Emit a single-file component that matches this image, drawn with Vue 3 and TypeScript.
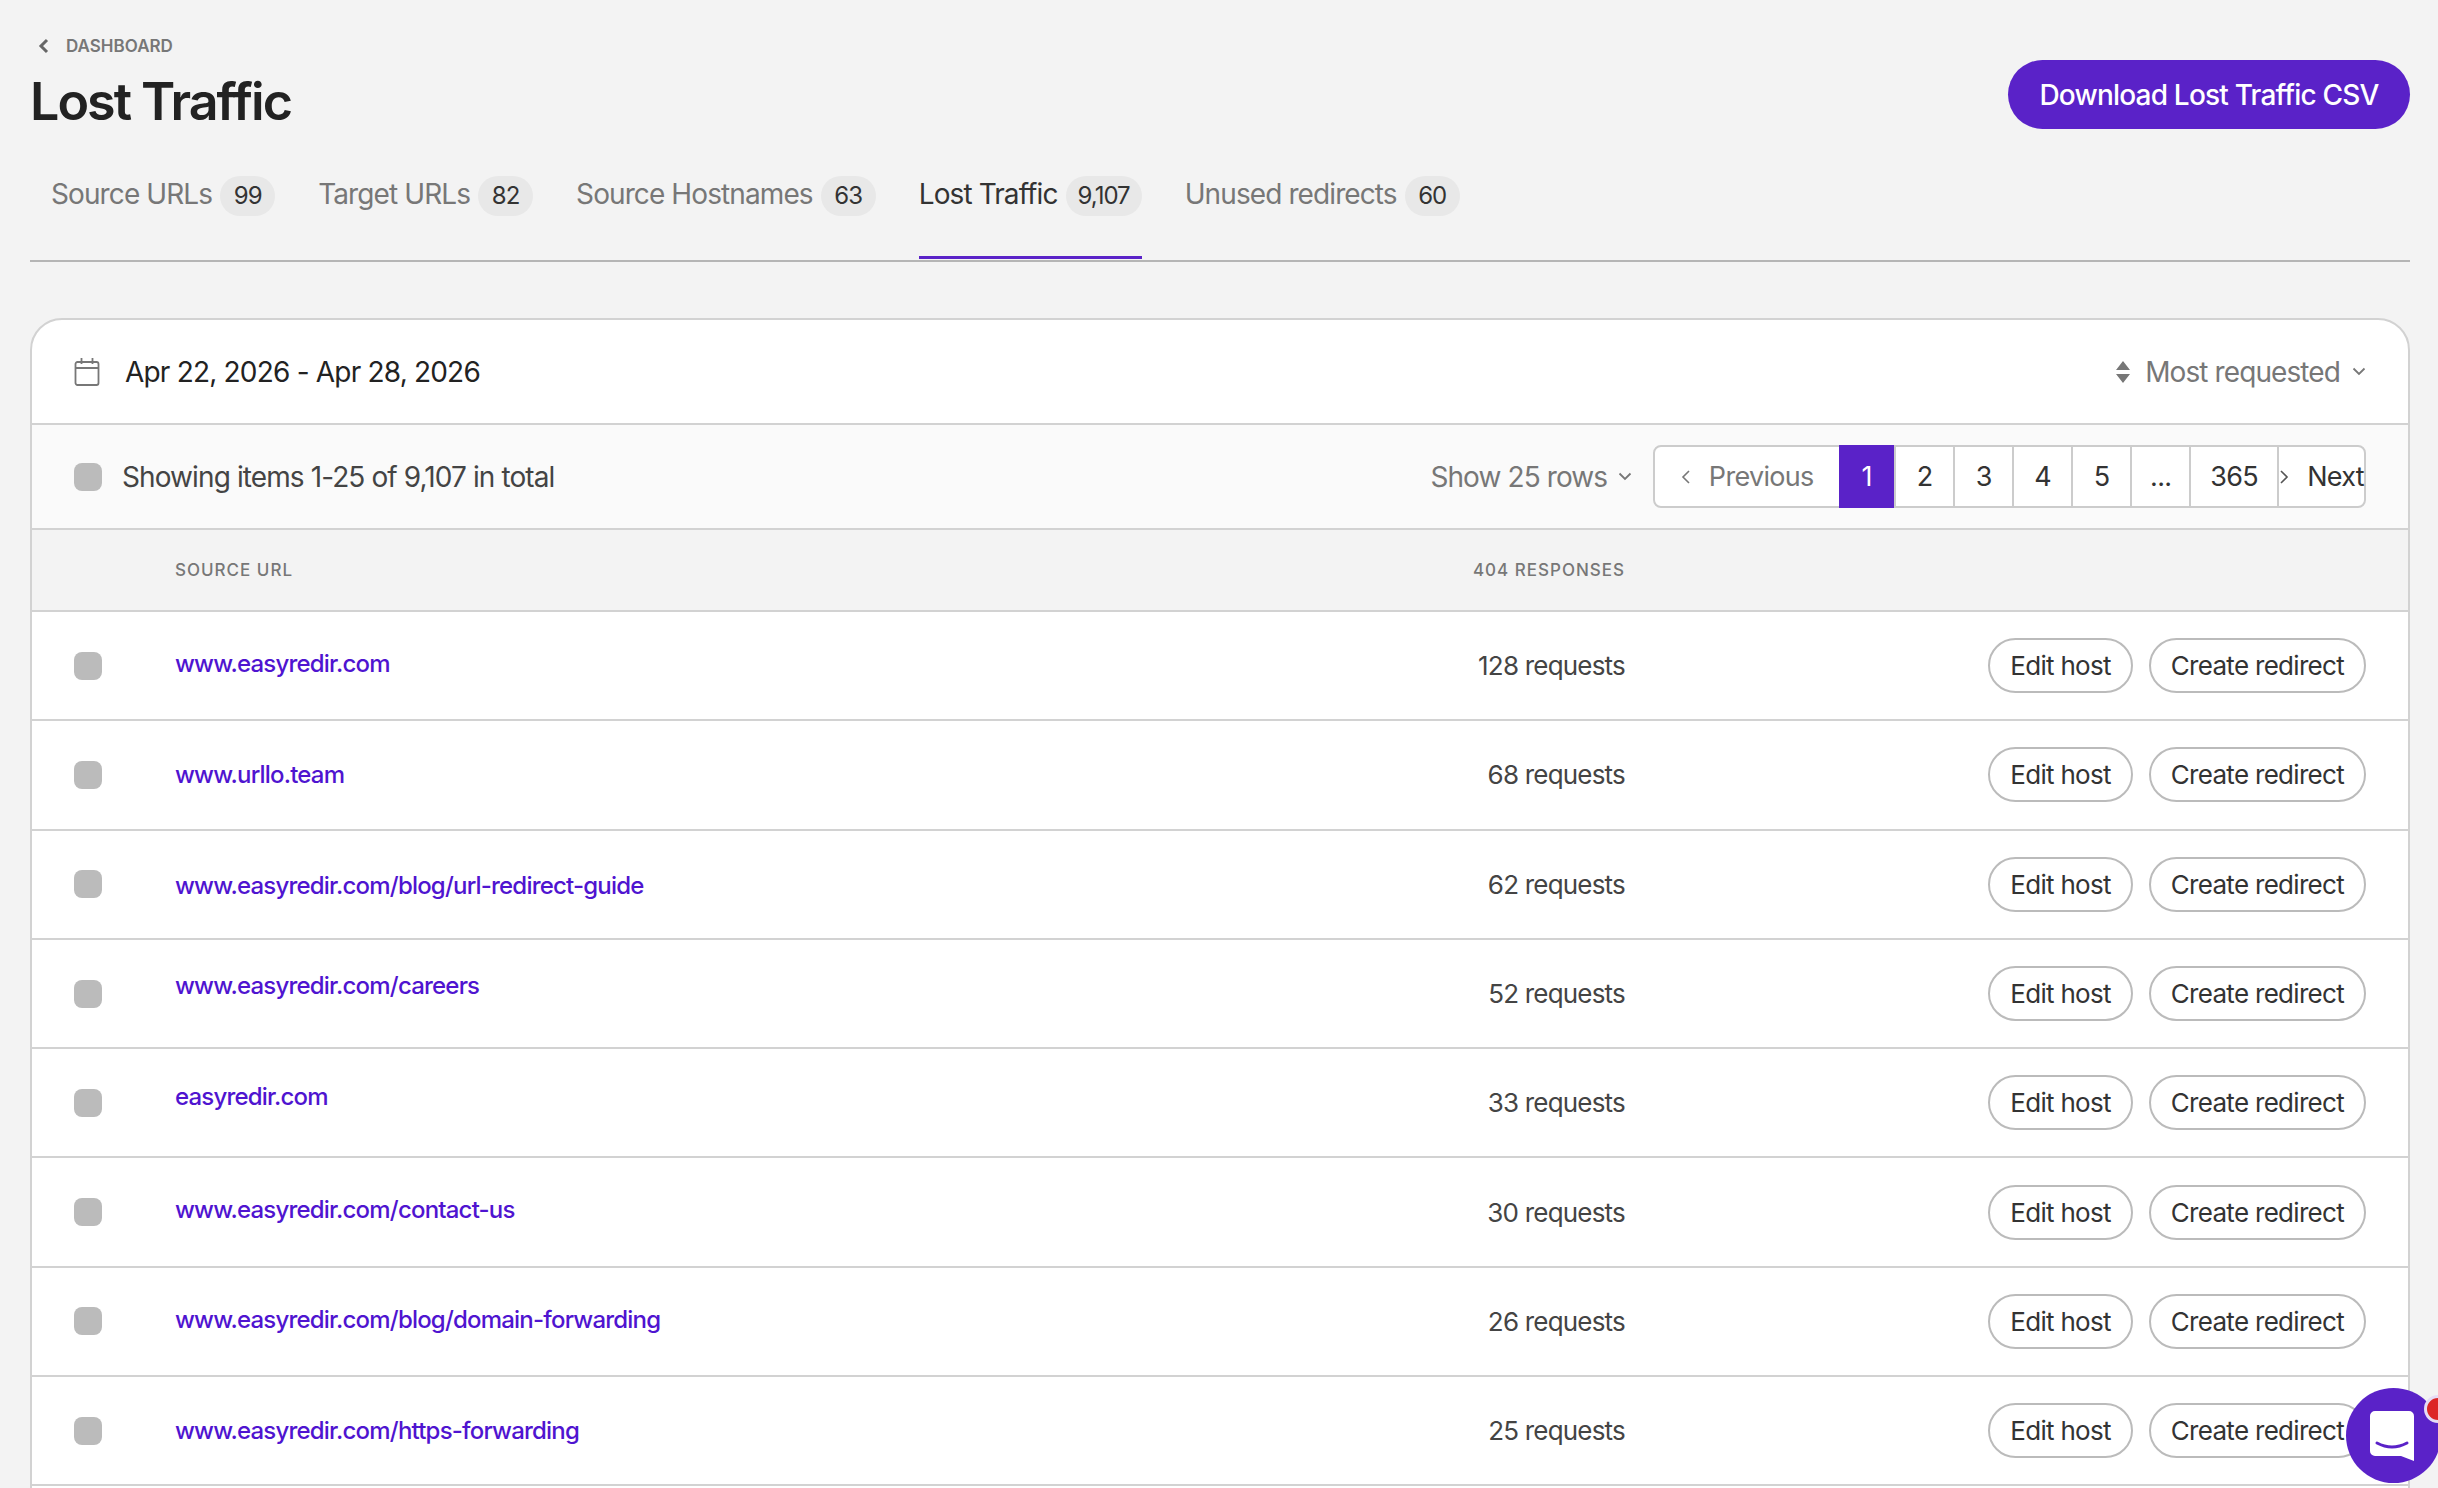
<template>
  <div class="page">
    <header class="page-head">
      <div>
        <a class="back-link" href="#">
          <svg width="12" height="16" viewBox="0 0 12 16"><path d="M9 2 3 8l6 6" fill="none" stroke="#666" stroke-width="3" /></svg>
          DASHBOARD
        </a>
        <h1 class="title">Lost Traffic</h1>
      </div>
      <button class="download-btn">Download Lost Traffic CSV</button>
    </header>

    <nav class="tabs">
      <a v-for="tab in tabs" :key="tab.label" class="tab" :class="{ active: tab.label === activeTab }" href="#">
        {{ tab.label }}
        <span class="tab-count">{{ tab.count }}</span>
      </a>
    </nav>

    <section class="card">
      <div class="date-row">
        <div class="date-range">
          <svg width="26" height="30" viewBox="0 0 26 30" fill="none" stroke="#777" stroke-width="1.8">
            <rect x="1.5" y="5" width="23" height="23" rx="2" />
            <path d="M1.5 11h23M7.5 1v6M18.5 1v6" />
          </svg>
          <span>Apr 22, 2026 - Apr 28, 2026</span>
        </div>
        <div class="sort">
          <svg width="16" height="22" viewBox="0 0 16 22" fill="#777"><path d="M8 0l7 9H1zM8 22l7-9H1z" /></svg>
          <span>Most requested</span>
          <svg class="chev" width="14" height="9" viewBox="0 0 14 9"><path d="M1.5 1.5 7 7l5.500-5.500" fill="none" stroke="#777" stroke-width="1.800" /></svg>
        </div>
      </div>

      <div class="toolbar">
        <div class="toolbar-left">
          <span class="check"></span>
          <span class="showing">Showing items 1-25 of 9,107 in total</span>
        </div>
        <div class="toolbar-right">
          <div class="rows-select">
            <span>Show 25 rows</span>
            <svg width="14" height="9" viewBox="0 0 14 9"><path d="M1.500 1.500 7 7l5.500-5.500" fill="none" stroke="#777" stroke-width="1.800" /></svg>
          </div>
          <div class="pager">
            <a class="pg pg-prev" href="#">
              <svg width="10" height="16" viewBox="0 0 10 16"><path d="M8 2 2 8l6 6" fill="none" stroke="#777" stroke-width="1.600" /></svg>
              Previous
            </a>
            <a v-for="p in pages" :key="p" class="pg pg-num" :class="{ current: p === '1', wide: p === '365' }" href="#">{{ p }}</a>
            <a class="pg pg-next" href="#">
              <svg width="10" height="16" viewBox="0 0 10 16"><path d="M2 2l6 6-6 6" fill="none" stroke="#555" stroke-width="1.600" /></svg>
              Next
            </a>
          </div>
        </div>
      </div>

      <div class="table-head">
        <span></span>
        <span class="th">SOURCE URL</span>
        <span class="th th-right">404 RESPONSES</span>
        <span></span>
      </div>

      <div v-for="row in rows" :key="row.url" class="table-row">
        <span class="check"></span>
        <a class="url" href="#" :style="{ marginBottom: row.shift + 'px' }">{{ row.url }}</a>
        <span class="requests">{{ row.requests }} requests</span>
        <div class="actions">
          <button class="pill">Edit host</button>
          <button class="pill">Create redirect</button>
        </div>
      </div>
    </section>

    <div class="chat">
      <svg width="44" height="50" viewBox="0 0 44 50">
        <path d="M5 0h34a5 5 0 0 1 5 5v45l-13-5H5a5 5 0 0 1-5-5V5a5 5 0 0 1 5-5z" fill="#fff" />
        <path d="M7 32q15 8 30 0" fill="none" stroke="#5a22c8" stroke-width="3" stroke-linecap="round" />
      </svg>
      <span class="chat-dot"></span>
    </div>
  </div>
</template>

<script setup lang="ts">
const activeTab = 'Lost Traffic';

const tabs = [
  { label: 'Source URLs', count: '99' },
  { label: 'Target URLs', count: '82' },
  { label: 'Source Hostnames', count: '63' },
  { label: 'Lost Traffic', count: '9,107' },
  { label: 'Unused redirects', count: '60' },
];

const pages = ['1', '2', '3', '4', '5', '...', '365'];

// shift = how far the link text sits above the row centre
const rows = [
  { url: 'www.easyredir.com', requests: 128, shift: 4 },
  { url: 'www.urllo.team', requests: 68, shift: 0 },
  { url: 'www.easyredir.com/blog/url-redirect-guide', requests: 62, shift: -2 },
  { url: 'www.easyredir.com/careers', requests: 52, shift: 16 },
  { url: 'easyredir.com', requests: 33, shift: 12 },
  { url: 'www.easyredir.com/contact-us', requests: 30, shift: 6 },
  { url: 'www.easyredir.com/blog/domain-forwarding', requests: 26, shift: 4 },
  { url: 'www.easyredir.com/https-forwarding', requests: 25, shift: 0 },
];
</script>

<style>
html,
body {
  margin: 0;
  background: #f3f3f3;
}
</style>

<style scoped>
.page {
  position: relative;
  height: 1488px;
  overflow: hidden;
  box-sizing: border-box;
  padding: 36px 28px 0 30px;
  background: #f3f3f3;
  font-family: Inter, "Liberation Sans", sans-serif;
  color: #333;
}

a {
  text-decoration: none;
  color: inherit;
}

.page-head {
  display: flex;
  justify-content: space-between;
  align-items: flex-start;
  height: 96px;
}

.back-link {
  display: flex;
  align-items: center;
  gap: 16px;
  height: 20px;
  padding-left: 8px;
  font-size: 17px;
  font-weight: 600;
  color: #777;
}

.title {
  margin: 16px 0 0;
  font-size: 52px;
  line-height: 60px;
  font-weight: 600;
  letter-spacing: -2px;
  color: #222;
}

.download-btn {
  margin-top: 24px;
  width: 402px;
  height: 69px;
  border: none;
  border-radius: 35px;
  background: #5a22c8;
  color: #fff;
  font-family: inherit;
  font-size: 28px;
  font-weight: 500;
  letter-spacing: -0.8px;
}

.tabs {
  display: flex;
  gap: 43px;
  margin-top: 44px;
  padding-left: 21px;
  height: 84px;
  border-bottom: 2px solid #b5b5b5;
}

.tab {
  display: flex;
  align-items: flex-start;
  gap: 8px;
  height: 83px;
  box-sizing: border-box;
  border-bottom: 3px solid transparent;
  font-size: 28px;
  line-height: 36px;
  letter-spacing: -0.9px;
  color: #777;
}

.tab.active {
  border-bottom-color: #5a22c8;
  color: #333;
}

.tab-count {
  display: flex;
  align-items: center;
  justify-content: center;
  min-width: 55px;
  box-sizing: border-box;
  height: 40px;
  padding: 0 12px;
  border-radius: 20px;
  background: #e8e8e8;
  color: #333;
  font-size: 24px;
  letter-spacing: -1px;
}

.card {
  margin-top: 56px;
  min-height: 1300px;
  box-sizing: border-box;
  border: 2px solid #d2d2d2;
  border-radius: 32px 32px 0 0;
  background: #fff;
  overflow: hidden;
}

.date-row,
.toolbar {
  display: flex;
  justify-content: space-between;
  align-items: center;
  box-sizing: border-box;
  height: 105px;
  padding: 0 42px;
  border-bottom: 2px solid #d2d2d2;
}

.toolbar {
  background: #fafafa;
}

.date-range {
  display: flex;
  align-items: center;
  gap: 25px;
  font-size: 28px;
  letter-spacing: -0.8px;
  color: #222;
}

.sort {
  display: flex;
  align-items: center;
  gap: 14px;
  font-size: 28px;
  letter-spacing: -0.9px;
  color: #777;
}

.chev {
  margin-left: -2px;
}

.toolbar-left,
.toolbar-right,
.rows-select {
  display: flex;
  align-items: center;
}

.toolbar-left {
  gap: 20px;
}

.check {
  display: block;
  width: 28px;
  height: 28px;
  border-radius: 8px;
  background: #bbb;
}

.showing {
  font-size: 28px;
  letter-spacing: -0.9px;
  color: #444;
}

.toolbar-right {
  gap: 21px;
}

.rows-select {
  gap: 11px;
  font-size: 28px;
  letter-spacing: -0.9px;
  color: #777;
}

.pager {
  display: flex;
  height: 63px;
  box-sizing: border-box;
  border: 2px solid #ccc;
  border-radius: 8px;
  background: #fff;
  font-size: 27px;
  letter-spacing: -0.7px;
}

.pg {
  display: flex;
  align-items: center;
  justify-content: center;
  box-sizing: border-box;
}

.pg-prev {
  gap: 18px;
  width: 184px;
  color: #777;
}

.pg-num {
  width: 59px;
  border-left: 2px solid #ccc;
  color: #333;
}

.pg-num.current {
  width: 55px;
  margin: -2px 0;
  border-left: none;
  background: #5a22c8;
  color: #fff;
}

.pg-num.wide {
  width: 88px;
}

.pg-next {
  flex: 1;
  gap: 18px;
  border-left: 2px solid #ccc;
  color: #333;
}

.table-head,
.table-row {
  display: grid;
  grid-template-columns: 101px 1fr 240px 741px;
  align-items: center;
  box-sizing: border-box;
  padding: 0 42px;
  border-bottom: 2px solid #d2d2d2;
}

.table-head {
  height: 82px;
  background: #f3f3f3;
}

.th {
  font-size: 17px;
  font-weight: 500;
  letter-spacing: 1px;
  color: #777;
}

.th-right {
  text-align: right;
}

.table-row {
  height: 109.3px;
}

.url {
  font-size: 24px;
  font-weight: 500;
  letter-spacing: -0.8px;
  color: #4f14d0;
}

.requests {
  font-size: 26px;
  letter-spacing: -0.8px;
  text-align: right;
  color: #444;
}

.actions {
  display: flex;
  justify-content: flex-end;
  gap: 16px;
}

.pill {
  height: 55px;
  padding: 0 20px;
  border: 2px solid #bbb;
  border-radius: 28px;
  background: #fff;
  font-family: inherit;
  font-size: 26px;
  letter-spacing: -0.7px;
  color: #333;
}

.chat {
  position: absolute;
  left: 2346px;
  top: 1388px;
  width: 95px;
  height: 95px;
  display: flex;
  align-items: center;
  justify-content: center;
  border-radius: 50%;
  background: #5a22c8;
}

.chat svg {
  margin-left: -3px;
}

.chat-dot {
  position: absolute;
  left: 78px;
  top: 7px;
  width: 22px;
  height: 22px;
  border: 3px solid #e6dcf5;
  border-radius: 50%;
  background: #dc2626;
}
</style>
